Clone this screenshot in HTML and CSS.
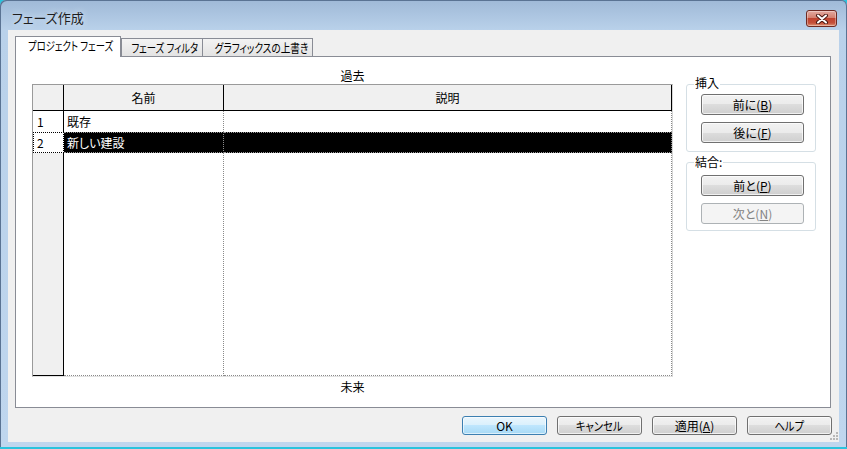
FILE: index.html
```html
<!DOCTYPE html>
<html lang="ja">
<head>
  <meta charset="UTF-8">
  <title>フェーズ作成</title>
  <link rel="stylesheet" href="styles.css">
</head>
<body>

  <div class="window">
    <div class="titlebar">
      <span class="title">フェーズ作成</span>
      <button class="close" type="button">
        <svg width="16" height="10" viewBox="0 0 16 10">
          <path d="M4 1.5 L12 8.5 M12 1.5 L4 8.5" stroke="#4a1812" stroke-width="4" stroke-linecap="round" fill="none"/>
          <path d="M4 1.5 L12 8.5 M12 1.5 L4 8.5" stroke="#fff" stroke-width="2" stroke-linecap="round" fill="none"/>
        </svg>
      </button>
    </div>

    <div class="client">
      <div class="tabs">
        <div class="tab active"><span class="label">プロジェクト フェーズ</span></div>
        <div class="tab filter"><span class="label">フェーズ フィルタ</span></div>
        <div class="tab override"><span class="label">グラフィックスの上書き</span></div>
      </div>

      <div class="panel">
        <div class="phases">
          <div class="edge-label">過去</div>
          <div class="grid">
            <div class="row head">
              <div class="cell rh"></div>
              <div class="cell name">名前</div>
              <div class="cell desc">説明</div>
            </div>
            <div class="row">
              <div class="cell rh">1</div>
              <div class="cell name">既存</div>
              <div class="cell desc"></div>
            </div>
            <div class="row sel">
              <div class="cell rh">2</div>
              <div class="cell name">新しい建設</div>
              <div class="cell desc"></div>
            </div>
            <div class="row filler">
              <div class="cell rh"></div>
              <div class="cell name"></div>
              <div class="cell desc"></div>
            </div>
          </div>
          <div class="edge-label future">未来</div>
        </div>

        <div class="side">
          <div class="group">
            <div class="group-title">挿入</div>
            <button class="btn" type="button">前に(<u>B</u>)</button>
            <button class="btn" type="button">後に(<u>F</u>)</button>
          </div>
          <div class="group">
            <div class="group-title">結合:</div>
            <button class="btn" type="button">前と(<u>P</u>)</button>
            <button class="btn" type="button" disabled>次と(<u>N</u>)</button>
          </div>
        </div>
      </div>

      <div class="actions">
        <button class="btn default" type="button">OK</button>
        <button class="btn" type="button"><span class="label narrow">キャンセル</span></button>
        <button class="btn" type="button">適用(<u>A</u>)</button>
        <button class="btn" type="button"><span class="label narrow">ヘルプ</span></button>
      </div>

      <svg class="grip" width="9" height="9" viewBox="0 0 9 9">
        <g fill="#b8b8b8">
          <rect x="7" y="1" width="2" height="2"/>
          <rect x="4" y="4" width="2" height="2"/>
          <rect x="7" y="4" width="2" height="2"/>
          <rect x="1" y="7" width="2" height="2"/>
          <rect x="4" y="7" width="2" height="2"/>
          <rect x="7" y="7" width="2" height="2"/>
        </g>
      </svg>
    </div>
  </div>

</body>
</html>
```

FILE: styles.css
```css
* {
  box-sizing: border-box;
}

body {
  margin: 0;
  background-color: #2ac3dd;
  font-family: "Noto Sans CJK JP", "Noto Sans", sans-serif;
  font-size: 12px;
  font-feature-settings: "palt";
  color: #000;
}

.window {
  width: 847px;
  height: 447px;
  display: flex;
  flex-direction: column;
  background: linear-gradient(#9fb9d7, #b9d1ea 30px, #bfd6ee);
  border-radius: 6px 6px 0 0;
  box-shadow: inset 1px 1px 0 #5a7393, inset -1px 0 0 #5a7393;
}

.titlebar {
  height: 30px;
  display: flex;
  align-items: flex-start;
  justify-content: space-between;
  padding: 0 10px 0 12px;
}

.title {
  margin-top: 10px;
  line-height: 16px;
  font-size: 13px;
  color: #1e1e1e;
  text-shadow: 0 0 6px #e6f0fa;
}

.close {
  width: 31px;
  height: 17px;
  margin-top: 10px;
  padding: 0;
  display: flex;
  align-items: center;
  justify-content: center;
  border: 1px solid #6e2a22;
  border-radius: 3px;
  background: linear-gradient(#e3aaa0, #d4806f 45%, #c0432f 50%, #c4503a 80%, #e09678);
  box-shadow: inset 0 0 0 1px rgba(255, 255, 255, 0.35);
}

.client {
  position: relative;
  flex: 1;
  margin: 0 8px 5px;
  padding: 6px 8px 0 7px;
  display: flex;
  flex-direction: column;
  background-color: #f0f0f0;
}

/* tabs */
.tabs {
  height: 20px;
  display: flex;
  align-items: flex-end;
}

.tab {
  height: 18px;
  border: 1px solid #898c95;
  border-bottom: none;
  background: linear-gradient(#f3f3f3, #ebebeb 50%, #e3e3e3);
  text-align: center;
  line-height: 17px;
  white-space: nowrap;
}

.label {
  display: inline-block;
  transform: scaleX(0.78);
}

.tab.override .label {
  transform: scaleX(0.8);
}

.label.narrow {
  transform: scaleX(0.86);
}

.tab.active {
  position: relative;
  z-index: 1;
  width: 106px;
  height: 21px;
  margin-bottom: -1px;
  background: #fff;
}

.tab.filter {
  width: 82px;
}

.tab.override {
  width: 110px;
  border-left: none;
}

.panel {
  height: 352px;
  display: flex;
  gap: 13px;
  padding: 10px 14px 0 16px;
  border: 1px solid #898c95;
  background-color: #fff;
}

/* phase grid */
.phases {
  width: 641px;
  display: flex;
  flex-direction: column;
}

.edge-label {
  height: 17px;
  line-height: 17px;
  text-align: center;
}

.edge-label.future {
  height: 19px;
  line-height: 19px;
}

.grid {
  height: 293px;
  display: flex;
  flex-direction: column;
  border-top: 1px solid #9a9a9a;
  border-left: 1px solid #9a9a9a;
  border-right: 1px solid #d6d6d6;
  border-bottom: 1px solid #e2e2e2;
}

.row {
  height: 21px;
  display: flex;
}

.cell {
  line-height: 21px;
  white-space: nowrap;
  overflow: hidden;
}

.rh {
  width: 31px;
  padding-left: 4px;
  border-right: 1px solid #000;
  background-color: #fff;
}

.name {
  width: 160px;
  padding-left: 3px;
  border-right: 1px dotted #8a8a8a;
}

.desc {
  width: 448px;
  border-right: 1px dotted #8a8a8a;
}

.head {
  height: 26px;
  border-bottom: 1px solid #000;
  background-color: #f0f0f0;
}

.head .cell {
  padding: 0;
  line-height: 25px;
  text-align: center;
  border-right: 1px solid #000;
  background-color: #f0f0f0;
}

.sel .rh {
  padding-left: 3px;
  line-height: 19px;
  border: 1px dotted #000;
}

.sel .name,
.sel .desc {
  line-height: 19px;
  color: #fff;
  background-color: #000;
  border-top: 1px dotted #9a9a9a;
  border-bottom: 1px dotted #9a9a9a;
}

.filler {
  flex: 1;
}

.filler .cell {
  border-bottom: 1px dotted #8a8a8a;
}

.filler .rh {
  background-color: #f0f0f0;
  border-bottom: 1px solid #000;
}

/* right side groups */
.side {
  width: 130px;
  margin-top: 17px;
}

.group {
  padding: 0 12px 8px 14px;
  border: 1px solid #d5dfe5;
  border-radius: 3px;
}

.group-title {
  width: fit-content;
  margin: -9px 0 4px -7px;
  padding: 0 1px;
  line-height: 14px;
  background-color: #fff;
}

.group + .group {
  margin-top: 10px;
  padding-bottom: 6px;
}

.group + .group .group-title {
  margin-top: -8px;
  margin-bottom: 6px;
}

/* buttons */
.btn {
  display: block;
  width: 103px;
  height: 21px;
  padding: 0;
  border: 1px solid #707070;
  border-radius: 3px;
  background: linear-gradient(#f2f2f2, #ebebeb 50%, #dddddd 50%, #cfcfcf);
  box-shadow: inset 0 0 0 1px rgba(255, 255, 255, 0.7);
  font: inherit;
  font-feature-settings: "palt";
  line-height: 19px;
  color: #000;
}

.btn + .btn {
  margin-top: 7px;
}

.btn:disabled {
  border-color: #adb2b5;
  background: #f4f4f4;
  box-shadow: none;
  color: #838383;
}

.actions {
  display: flex;
  justify-content: flex-end;
  gap: 10px;
  margin: 8px -1px 0 0;
}

.actions .btn {
  width: 85px;
  height: 19px;
  margin: 0;
  line-height: 17px;
}

.actions .btn.default {
  border-color: #3c7fb1;
  background: linear-gradient(#eaf6fd, #d9f0fc 50%, #bee6fd 50%, #a7d9f5);
  box-shadow: inset 0 0 0 1px rgba(255, 255, 255, 0.6);
}

.grip {
  position: absolute;
  right: 1px;
  bottom: 2px;
}
```
